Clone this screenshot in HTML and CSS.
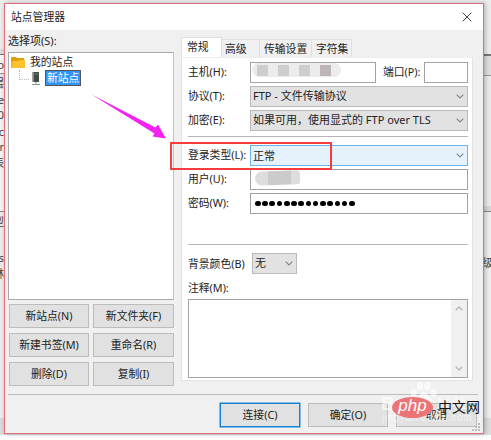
FILE: index.html
```
<!DOCTYPE html>
<html lang="zh-CN">
<head>
<meta charset="utf-8">
<title>站点管理器</title>
<link rel="stylesheet" href="styles.css">
</head>
<body>
<div class="desktop">
  <div class="behind behind-left" aria-hidden="true">
    <span class="frag f1">o</span><span class="frag f2">层</span><span class="frag f3">e</span><span class="frag f4">0</span><span class="frag f5">c</span><span class="frag f6">r</span><span class="frag f7">表</span><span class="frag f8">型</span><span class="frag f9">s</span><span class="frag f10">林</span>
  </div>
  <div class="behind behind-right" aria-hidden="true"><span class="frag r1">级</span></div>
  <div class="dialog">
    <header class="titlebar">
      <span>站点管理器</span>
      <svg class="close" viewBox="0 0 10 10"><path d="M.7.7l8.6 8.6M9.3.7L.7 9.3"/></svg>
    </header>
    <main class="content">
      <section class="sites">
        <div class="sites-label">选择项(S):</div>
        <div class="tree">
          <div class="tree-root">
            <svg class="folder" viewBox="0 0 15 13"><path d="M0 1h5l1 1h7v9H0z" fill="#dfa00e"/><path d="M1 12L2 5h5l2-1h5v8z" fill="#ffc22d"/><path d="M0 5h2L1 12H0z" fill="#f5b31c"/></svg>
            <span>我的站点</span>
          </div>
          <div class="tree-child">
            <i class="branch"></i>
            <svg class="server" viewBox="0 0 8 15"><path d="M.5 1h6.500v10H.5z" fill="#454947"/><path d="M1 1h1v10H1z" fill="#858a88"/><path d="M3 2h3v2H3z" fill="#388245"/><path d="M4 11v3M0 13.500h8" stroke="#8c999c" fill="none"/></svg>
            <span class="selected">新站点</span>
          </div>
        </div>
        <div class="site-actions">
          <button>新站点(N)</button><button>新文件夹(F)</button>
          <button>新建书签(M)</button><button>重命名(R)</button>
          <button>删除(D)</button><button>复制(I)</button>
        </div>
      </section>
      <section class="settings">
        <nav class="tabs">
          <span class="tab active">常规</span><span class="tab t2">高级</span><span class="tab t3">传输设置</span><span class="tab t4">字符集</span>
        </nav>
        <div class="panel">
          <div class="row">
            <label>主机(H):</label>
            <div class="field host"><span class="mosaic"><i></i><i></i><i></i><i></i></span></div>
            <label class="port-label">端口(P):</label>
            <div class="field port"></div>
          </div>
          <div class="row"><label>协议(T):</label><div class="field select"><span>FTP - 文件传输协议</span><svg class="chev" viewBox="0 0 8 5"><path d="M.7.7L4 4 7.300.7"/></svg></div></div>
          <div class="row"><label>加密(E):</label><div class="field select"><span>如果可用，使用显式的 FTP over TLS</span><svg class="chev" viewBox="0 0 8 5"><path d="M.7.7L4 4 7.300.7"/></svg></div></div>
          <div class="rule rule-a"></div>
          <div class="row"><label>登录类型(L):</label><div class="field select focus"><span>正常</span><svg class="chev" viewBox="0 0 8 5"><path d="M.7.7L4 4 7.300.7"/></svg></div></div>
          <div class="row"><label>用户(U):</label><div class="field"><span class="smudge"></span></div></div>
          <div class="row"><label>密码(W):</label><div class="field dots"><i></i><i></i><i></i><i></i><i></i><i></i><i></i><i></i><i></i><i></i><i></i><i></i><i></i><i></i></div></div>
          <div class="rule rule-b"></div>
          <div class="row color-row"><label>背景颜色(B)</label><div class="field select color"><span>无</span><svg class="chev" viewBox="0 0 8 5"><path d="M.7.7L4 4 7.300.7"/></svg></div></div>
          <div class="comment-label">注释(M):</div>
          <div class="comment"><div class="scroll"><svg class="chev" viewBox="0 0 8 5"><path d="M.7 4.300L4 1l3.300 3.300"/></svg><svg class="chev" viewBox="0 0 8 5"><path d="M.7.7L4 4 7.300.7"/></svg></div></div>
        </div>
      </section>
    </main>
    <footer class="footer">
      <button class="primary">连接(C)</button><button>确定(O)</button><button class="cancel">取消</button>
    </footer>
  </div>
  <svg class="grip" viewBox="0 0 8 8"><path d="M6 0h2v2H6zM3 3h2v2H3zM6 3h2v2H6zM0 6h2v2H0zM3 6h2v2H3zM6 6h2v2H6z" fill="#bcbcbc"/></svg>
  <svg class="arrow" viewBox="0 0 76 46"><path d="M.5.500L64.500 33.500 67 30.500 75 44.500 61.500 42.500 63.500 39.500z" fill="#f222f2"/></svg>
  <div class="callout"></div>
  <div class="watermark">
    <svg class="paw" viewBox="0 0 28 26"><g fill="#fff"><ellipse cx="10" cy="5" rx="3.200" ry="4.500"/><ellipse cx="17.500" cy="5" rx="3.200" ry="4.500"/><ellipse cx="3.800" cy="11.500" rx="3" ry="4"/><ellipse cx="23.500" cy="12" rx="3" ry="4"/><path d="M13.500 11c4 0 4 4 7 6s2 8-2 8H9c-5 0-6-5-2-8 3-2 3-6 6.500-6z"/></g></svg>
    <span class="wm-name">Bai</span><span class="wm-exp">经验</span>
    <span class="wm-url">jingyan.baidu.com</span>
  </div>
  <div class="brand">
    <span class="php">php</span><span class="cn">中文网</span>
  </div>
</div>
</body>
</html>
```
FILE: styles.css
```
* { box-sizing: border-box; }
body {
  margin: 0;
  font-family: "Noto Sans", "Noto Sans CJK SC", sans-serif;
  font-size: 10.8px;
  line-height: 16px;
  color: #222;
  background: #fff;
}
.desktop {
  position: relative;
  width: 491px;
  height: 440px;
  padding: 3px 0 0 4px;
  overflow: hidden;
  background: linear-gradient(#f0f0f0 0 418px, #dcdcdc 418px 435px, #fff 435px);
}
.behind { position: absolute; overflow: hidden; color: #454545; }
.behind-left {
  left: 0; top: 0; width: 4px; height: 418px;
  background: linear-gradient(#eee 0 49px, #ddd 49px 54px, #777 54px 55px, #f8f8f8 55px 73px, #999 73px 74px, #e6e6e6 74px 89px, #f5f5f5 89px 211px, #888 211px 212px, #eee 212px);
}
.behind-right {
  right: 0; top: 0; width: 8px; height: 435px;
  background: linear-gradient(#ececec 0 54px, #777 54px 56px, #dedede 56px 75px, #999 75px 76px, #eaeaea 76px 206px, #d8d8d8 206px 211px, #888 211px 212px, #eee 212px 418px, #ddd 418px);
}
.frag { position: absolute; right: 0; }
.f1 { top: 57px; } .f2 { top: 75px; } .f3 { top: 92px; } .f4 { top: 107px; }
.f5 { top: 124px; } .f6 { top: 139px; } .f7 { top: 155px; } .f8 { top: 214px; }
.f9 { top: 250px; } .f10 { top: 266px; } .r1 { top: 255px; right: -2px; }
.dialog {
  position: relative;
  width: 480px;
  height: 431px;
  background: #f0f0f0;
  border: 1px solid #e2707a;
  box-shadow: 1px 0 5px rgba(0, 0, 0, .28);
  display: flex;
  flex-direction: column;
}
.titlebar {
  height: 26px;
  flex: none;
  display: flex;
  align-items: center;
  justify-content: space-between;
  padding: 0 11px 0 6px;
  background: #fff;
}
.close { width: 10px; height: 10px; fill: none; stroke: #444; stroke-width: 1; }
.content { display: flex; height: 365px; border-bottom: 1px solid #bcbcbc; margin: 0 5px 0 3px; }
.sites { width: 166px; flex: none; }
.sites-label { height: 22px; padding-top: 3px; font-size: 11px; }
.tree { height: 248px; border: 1px solid #a6a8ae; border-right-color: #c0c2ca; background: #fff; padding: 1px 2px; }
.tree-root, .tree-child { display: flex; align-items: center; height: 16px; }
.folder { width: 15px; height: 13px; margin-right: 4px; }
.branch { width: 10px; height: 10px; margin: 0 3px 6px 8px; border: dotted #bbb; border-width: 0 0 1px 1px; }
.server { width: 8px; height: 15px; margin-right: 5px; }
.selected { background: #3394f8; color: #fff; border: 1px solid #555; height: 16px; line-height: 13px; padding: 0 1px; }
.site-actions { display: grid; grid-template-columns: 80px 81px; grid-auto-rows: 24px; gap: 5px 4px; padding: 4px 0 0 1px; }
button {
  font: inherit; color: #222; line-height: 14px;
  background: #e1e1e1; border: 1px solid #bcbcbc; padding: 0; margin: 0; border-radius: 0;
}
.settings { width: 292px; margin: 7px 0 0 7px; }
.tabs { display: flex; align-items: flex-end; height: 20px; }
.tab { height: 18px; border: 1px solid #dfdfdf; border-left: 0; border-bottom: 0; line-height: 17px; white-space: nowrap; }
.tab.active { width: 41px; height: 20px; background: #fff; border-left: 1px solid #e2e2e2; padding-left: 5px; }
.t2 { width: 38px; padding-left: 3px; } .t3 { width: 52px; padding-left: 4px; } .t4 { width: 40px; padding-left: 4px; }
.panel { height: 324px; background: #fff; border: 1px solid #e2e2e2; border-top-color: #eee; padding: 4px 4px 0 6px; }
.row { display: flex; align-items: center; height: 21px; margin-bottom: 3px; }
label { width: 62px; flex: none; white-space: nowrap; padding-bottom: 2px; }
.field { flex: 1; height: 21px; border: 1px solid #a3a3a3; background: #fff; display: flex; align-items: center; padding: 0 3px 0 2px; white-space: nowrap; min-width: 0; }
.host { flex: none; width: 126px; align-items: flex-start; padding-left: 1px; }
.port-label { width: 41px; margin-left: 7px; }
.mosaic { display: flex; gap: 10px; width: 89px; height: 14px; padding: 2px 5px; background: #ececec; border-radius: 7px 7px 7px 8px; }
.mosaic i { width: 11px; height: 11px; background: #cfcdd0; }
.mosaic i:last-child { background: #bdb5b9; }
.select { justify-content: space-between; background: #e2e2e2; border-color: #b9b9b9; font-size: 11px; }
.select span { padding-bottom: 1px; }
.chev { width: 8px; height: 5px; fill: none; stroke: #858585; stroke-width: 1.1; flex: none; }
.focus { background: #e5f1fb; border-color: #6db2e8; }
.focus span { padding: 0; }
.rule { height: 1px; background: #b5b5b5; }
.rule-a { margin: 5px 0 8px; }
.row + .rule-b { margin: 30px 0 8px; }
.smudge { width: 45px; height: 14px; margin: 0 0 3px 2px; background: linear-gradient(90deg, #ddd 0 13px, #cbcbcb 13px 36px, #ddd 36px); border-radius: 8px 3px 4px 8px; transform: rotate(-2deg); }
.dots { gap: 1.65px; padding-left: 4px; }
.dots i { width: 5.6px; height: 5.6px; border-radius: 50%; background: #000; flex: none; }
.color-row label { width: 64px; padding: 0; }
.color { flex: none; width: 45px; }
.comment-label { padding-top: 3px; height: 22px; }
.comment { height: 79px; border: 1px solid #a3a3a3; display: flex; justify-content: flex-end; }
.scroll { width: 16px; background: #f0f0f0; display: flex; flex-direction: column; justify-content: space-between; align-items: center; padding: 6px 0; }
.scroll .chev { stroke: #b7b7b7; stroke-width: 1.3; }
.footer { display: grid; grid-template-columns: 80px 80px 81px; gap: 8px; height: 24px; margin: 8px 0 0 215px; }
.footer .primary { border: 1px solid #1683d8; box-shadow: 0 0 0 .5px #1683d8; }
.grip { position: absolute; left: 472px; top: 423px; width: 8px; height: 8px; }
.arrow { position: absolute; left: 91px; top: 94px; width: 76px; height: 46px; }
.callout { position: absolute; left: 170px; top: 142px; width: 162px; height: 28px; border: 2px solid #f63c3c; }
.watermark { position: absolute; left: 381px; top: 381px; width: 94px; height: 45px; color: #fff; opacity: .6; }
.paw { position: absolute; left: 29px; top: 0; width: 28px; height: 26px; }
.wm-name { position: absolute; left: 0; top: 13px; font: bold 19px/19px "Liberation Sans", sans-serif; }
.wm-exp { position: absolute; left: 56px; top: 11px; font-size: 15px; line-height: 20px; }
.wm-url { position: absolute; left: 1px; top: 31px; font: 10px/12px "Liberation Sans", sans-serif; letter-spacing: .55px; }
.brand { position: absolute; left: 392px; top: 396px; display: flex; align-items: center; height: 22px; }
.php { width: 41px; height: 21px; border-radius: 50%; background: #ec7477; color: #fff; font: italic 17px/18px "Liberation Sans", sans-serif; text-align: center; }
.cn { color: #171313; font-size: 14px; line-height: 20px; margin-left: 5px; white-space: nowrap; }
```
